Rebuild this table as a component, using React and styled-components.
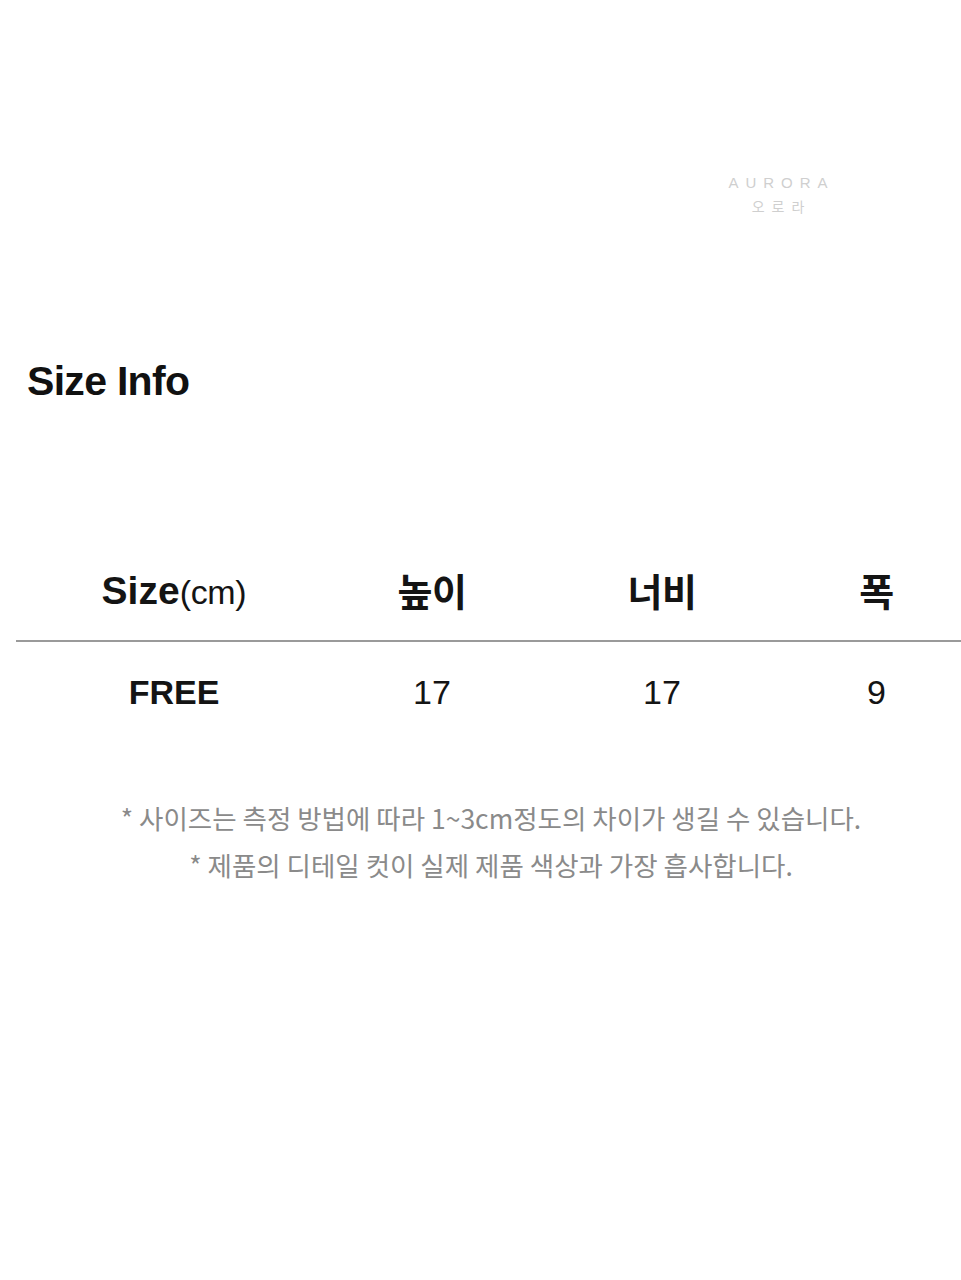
import React from 'react';
import styled, { createGlobalStyle } from 'styled-components';

const GlobalStyle = createGlobalStyle`
  html, body {
    margin: 0;
    padding: 0;
    background: #ffffff;
  }
  body {
    font-family: "Liberation Sans", "Noto Sans CJK KR", sans-serif;
    color: #111111;
  }
`;

const Page = styled.div`
  width: 961px;
  height: 1280px;
  background: #fff;
  overflow: hidden;
  padding-top: 174px;
  box-sizing: border-box;
`;

const Brand = styled.div`
  width: 200px;
  margin-left: 678px;
  display: flex;
  flex-direction: column;
  align-items: center;
  gap: 5px;
  color: #cfcfcf;
`;

const BrandName = styled.span`
  font-family: "Liberation Sans", sans-serif;
  font-size: 15px;
  letter-spacing: 7px;
  margin-right: -7px;
  line-height: 18px;
`;

const BrandKor = styled.span`
  font-family: "Noto Sans CJK KR", sans-serif;
  font-size: 14px;
  letter-spacing: 7px;
  margin-right: -7px;
  line-height: 18px;
`;

const Title = styled.h2`
  margin: 142px 0 0 27px;
  font-family: "Liberation Sans", sans-serif;
  font-weight: 700;
  font-size: 41px;
  letter-spacing: -0.7px;
  line-height: 48px;
`;

const Table = styled.div`
  margin: 135px 0 0 16px;
  width: 945px;
`;

const Row = styled.div`
  display: grid;
  grid-template-columns: 316px 200px 260px 1fr;
  align-items: center;
  height: ${p => p.$h}px;
  border-bottom: ${p => (p.$line ? '2px solid #9a9a9a' : 'none')};
`;

const Cell = styled.div`
  text-align: center;
  font-family: "Liberation Sans", "Noto Sans CJK KR", sans-serif;
  font-size: ${p => p.$size}px;
  font-weight: ${p => (p.$bold ? 700 : 400)};
  color: #141414;
  line-height: 1;
`;

const Unit = styled.span`
  font-weight: 400;
  font-size: 34px;
  letter-spacing: -0.3px;
`;

const Kor = styled.span`
  font-family: "Noto Sans CJK KR", sans-serif;
  font-weight: 700;
  font-size: 38px;
  letter-spacing: -0.5px;
`;

const Notes = styled.div`
  margin-top: 60px;
  display: flex;
  flex-direction: column;
  align-items: center;
  gap: 15px;
  padding-left: 21px;
`;

const Note = styled.p`
  margin: 0;
  font-family: "Noto Sans CJK KR", sans-serif;
  font-size: 26.5px;
  letter-spacing: 0;
  line-height: 32px;
  color: #8a8a8a;
`;

export default function App() {
  return (
    <>
      <GlobalStyle />
      <Page>
        <Brand>
          <BrandName>AURORA</BrandName>
          <BrandKor>오로라</BrandKor>
        </Brand>

        <Title>Size Info</Title>

        <Table>
          <Row $h={100} $line>
            <Cell $size={39} $bold>Size<Unit>(cm)</Unit></Cell>
            <Cell><Kor>높이</Kor></Cell>
            <Cell><Kor>너비</Kor></Cell>
            <Cell><Kor>폭</Kor></Cell>
          </Row>
          <Row $h={100}>
            <Cell $size={34} $bold>FREE</Cell>
            <Cell $size={34}>17</Cell>
            <Cell $size={34}>17</Cell>
            <Cell $size={34}>9</Cell>
          </Row>
        </Table>

        <Notes>
          <Note>* 사이즈는 측정 방법에 따라 1~3cm정도의 차이가 생길 수 있습니다.</Note>
          <Note>* 제품의 디테일 컷이 실제 제품 색상과 가장 흡사합니다.</Note>
        </Notes>
      </Page>
    </>
  );
}
